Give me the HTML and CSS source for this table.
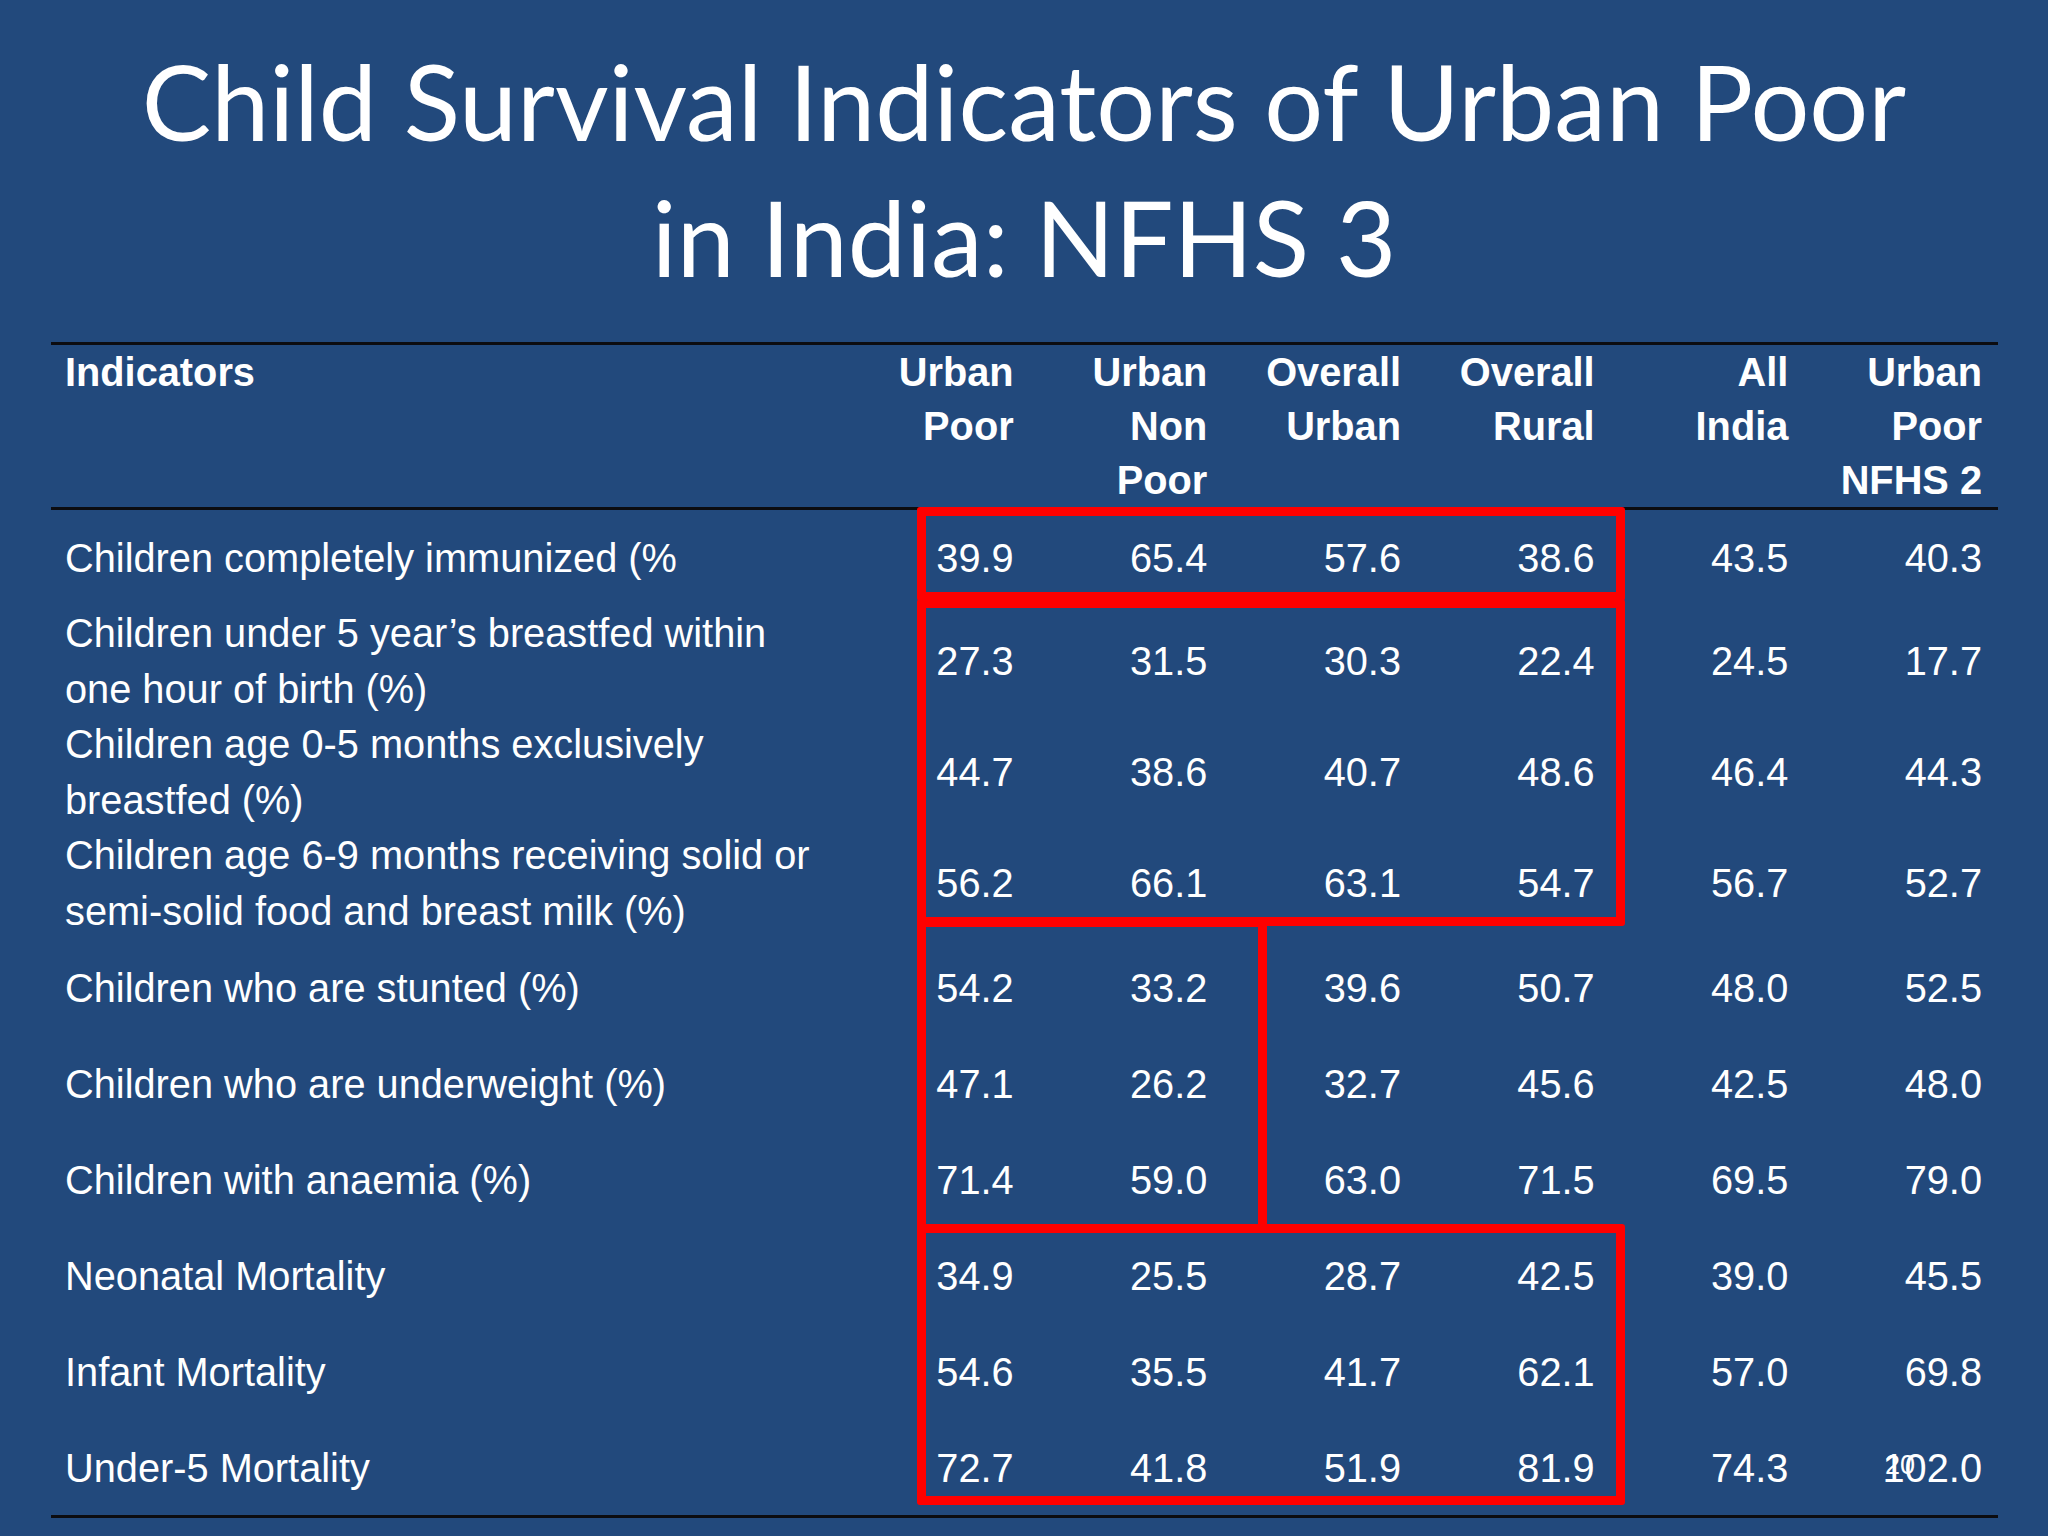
FILE: index.html
```html
<!DOCTYPE html>
<html lang="en">
<head>
<meta charset="utf-8">
<title>Child Survival Indicators of Urban Poor in India: NFHS 3</title>
<link rel="stylesheet" href="styles.css">
</head>
<body>
<div class="slide">
  <h1 class="title">Child Survival Indicators of Urban Poor<br>in India: NFHS 3</h1>
  <div class="table">
    <div class="row head">
      <div class="cell ind">Indicators</div>
      <div class="cell num">Urban<br>Poor</div>
      <div class="cell num">Urban<br>Non<br>Poor</div>
      <div class="cell num">Overall<br>Urban</div>
      <div class="cell num">Overall<br>Rural</div>
      <div class="cell num">All<br>India</div>
      <div class="cell num">Urban<br>Poor<br>NFHS 2</div>
    </div>
    <div class="row single first">
      <div class="cell ind">Children completely immunized (%</div>
      <div class="cell num">39.9</div><div class="cell num">65.4</div><div class="cell num">57.6</div><div class="cell num">38.6</div><div class="cell num">43.5</div><div class="cell num">40.3</div>
    </div>
    <div class="row double">
      <div class="cell ind">Children under 5 year’s breastfed within<br>one hour of birth (%)</div>
      <div class="cell num">27.3</div><div class="cell num">31.5</div><div class="cell num">30.3</div><div class="cell num">22.4</div><div class="cell num">24.5</div><div class="cell num">17.7</div>
    </div>
    <div class="row double">
      <div class="cell ind">Children age 0-5 months exclusively<br>breastfed (%)</div>
      <div class="cell num">44.7</div><div class="cell num">38.6</div><div class="cell num">40.7</div><div class="cell num">48.6</div><div class="cell num">46.4</div><div class="cell num">44.3</div>
    </div>
    <div class="row double">
      <div class="cell ind">Children age 6-9 months receiving solid or<br>semi-solid food and breast milk (%)</div>
      <div class="cell num">56.2</div><div class="cell num">66.1</div><div class="cell num">63.1</div><div class="cell num">54.7</div><div class="cell num">56.7</div><div class="cell num">52.7</div>
    </div>
    <div class="row single">
      <div class="cell ind">Children who are stunted (%)</div>
      <div class="cell num">54.2</div><div class="cell num">33.2</div><div class="cell num">39.6</div><div class="cell num">50.7</div><div class="cell num">48.0</div><div class="cell num">52.5</div>
    </div>
    <div class="row single">
      <div class="cell ind">Children who are underweight (%)</div>
      <div class="cell num">47.1</div><div class="cell num">26.2</div><div class="cell num">32.7</div><div class="cell num">45.6</div><div class="cell num">42.5</div><div class="cell num">48.0</div>
    </div>
    <div class="row single">
      <div class="cell ind">Children with anaemia (%)</div>
      <div class="cell num">71.4</div><div class="cell num">59.0</div><div class="cell num">63.0</div><div class="cell num">71.5</div><div class="cell num">69.5</div><div class="cell num">79.0</div>
    </div>
    <div class="row single">
      <div class="cell ind">Neonatal Mortality</div>
      <div class="cell num">34.9</div><div class="cell num">25.5</div><div class="cell num">28.7</div><div class="cell num">42.5</div><div class="cell num">39.0</div><div class="cell num">45.5</div>
    </div>
    <div class="row single">
      <div class="cell ind">Infant Mortality</div>
      <div class="cell num">54.6</div><div class="cell num">35.5</div><div class="cell num">41.7</div><div class="cell num">62.1</div><div class="cell num">57.0</div><div class="cell num">69.8</div>
    </div>
    <div class="row single last">
      <div class="cell ind">Under-5 Mortality</div>
      <div class="cell num">72.7</div><div class="cell num">41.8</div><div class="cell num">51.9</div><div class="cell num">81.9</div><div class="cell num">74.3</div><div class="cell num">102.0</div>
    </div>
  </div>
  <div class="box box-a"></div>
  <div class="box box-b"></div>
  <div class="box box-c"></div>
  <div class="box box-d"></div>
  <div class="slide-num">20</div>
</div>
</body>
</html>
```

FILE: styles.css
```css
html, body {
  margin: 0;
  padding: 0;
  background: #22497c;
}

.slide {
  position: relative;
  width: 2048px;
  height: 1536px;
  background: #22497c;
  color: #ffffff;
  overflow: hidden;
}

.title {
  margin: 0;
  padding-top: 33px;
  font-family: "Lato", "Open Sans", sans-serif;
  font-weight: 400;
  font-size: 104px;
  line-height: 136px;
  text-align: center;
  color: #ffffff;
}

.table {
  margin: 37px 0 0 51px;
  width: 1947px;
  font-family: "Liberation Sans", Arial, sans-serif;
  font-size: 39.75px;
  color: #ffffff;
  border-bottom: 3px solid #0c0c10;
}

.row {
  display: grid;
  box-sizing: border-box;
  grid-template-columns: 785px repeat(6, 1fr);
  align-items: center;
}

.row.head {
  box-sizing: content-box;
  align-items: start;
  border-top: 3px solid #0c0c10;
  border-bottom: 3px solid #0c0c10;
  font-weight: 700;
  line-height: 54px;
  height: 162px;
}

.row.single {
  height: 96px;
  padding-top: 3px;
  line-height: 55px;
}

.row.first {
  height: 96px;
  padding-top: 0;
}

.row.double {
  height: 111px;
  line-height: 55.5px;
}

.cell.ind {
  padding-left: 14px;
  text-align: left;
}

.cell.num {
  padding-right: 16px;
  text-align: right;
}

.box {
  position: absolute;
  box-sizing: border-box;
  border: 9px solid #ff0000;
  border-radius: 3px;
}

.box-a { left: 917px; top: 507px; width: 708px; height: 94px; }
.box-b { left: 917px; top: 599px; width: 708px; height: 327px; }
.box-c { left: 917px; top: 918px; width: 350px; height: 315px; }
.box-d { left: 917px; top: 1224px; width: 708px; height: 281px; }

.slide-num {
  position: absolute;
  left: 1885px;
  top: 1449px;
  font-family: "Liberation Sans", Arial, sans-serif;
  font-size: 27px;
  line-height: 32px;
  color: #ffffff;
}
```
